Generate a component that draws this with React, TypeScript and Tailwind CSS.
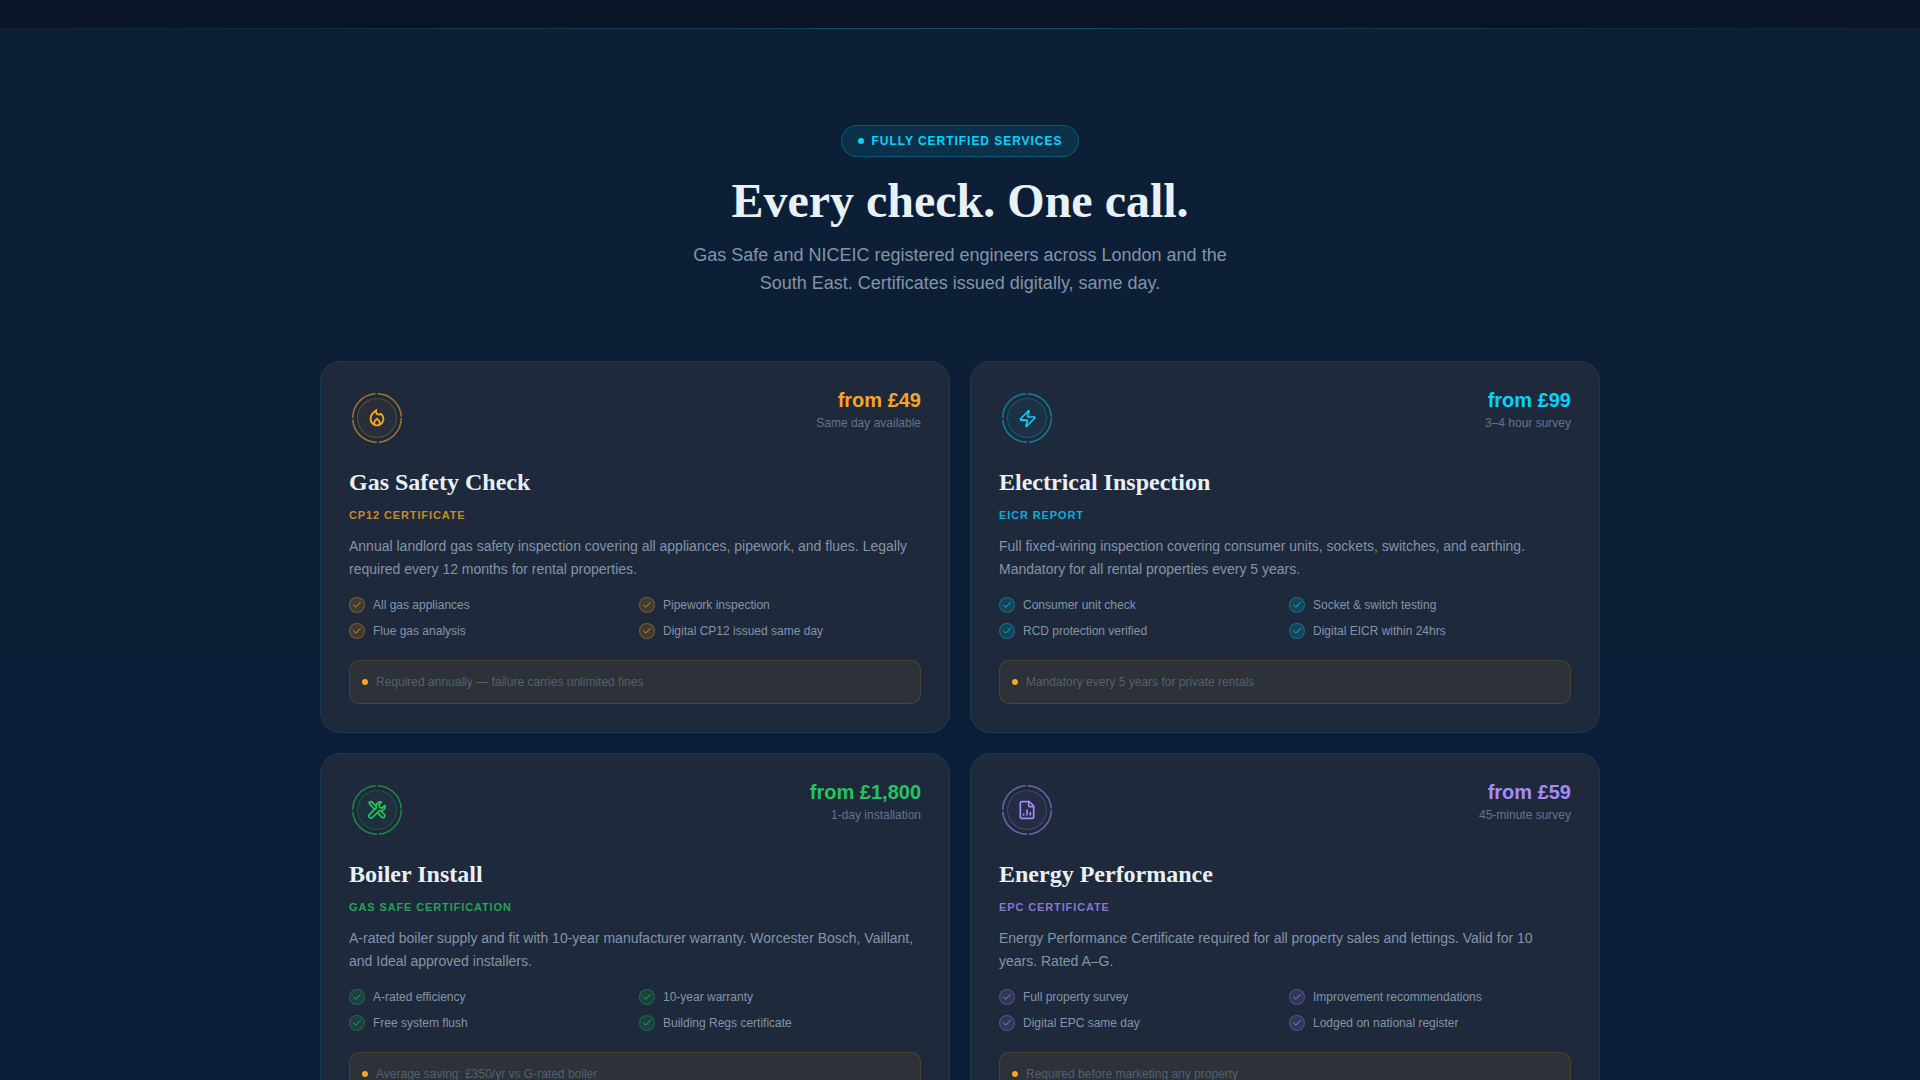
import { Check, Zap, FileChartColumn } from "lucide-react";
import { MdOutlineLocalFireDepartment } from "react-icons/md";
import type { ReactNode } from "react";

type Service = {
  title: string;
  price: string;
  note: string;
  cert: string;
  desc: string;
  features: string[];
  alert: string;
  icon: ReactNode;
  priceCls: string;
  certCls: string;
  ringCls: string;
  innerCls: string;
  tickCls: string;
};

// wrench crossed with a screwdriver, no package has this exact one
function ToolsIcon() {
  return (
    <svg width="20" height="20" viewBox="0 0 24 24" fill="none" stroke="currentColor" strokeWidth="2" strokeLinecap="round" strokeLinejoin="round">
      <path d="M17.5 2.6a5 5 0 0 0-6.2 6.6L3 17.5a2.4 2.4 0 0 0 3.5 3.5l8.3-8.3a5 5 0 0 0 6.6-6.2l-3.2 3.2-3-.9-.9-3z" />
      <path d="M8.5 10.5 3.5 5.5 2.5 2.5l3-.5 5 5" />
      <path d="m13.5 16 4 4.5a2.3 2.3 0 0 0 3.3-3.2L16.5 13.2" />
    </svg>
  );
}

const SERVICES: Service[] = [
  {
    title: "Gas Safety Check",
    price: "from £49",
    note: "Same day available",
    cert: "CP12 CERTIFICATE",
    desc: "Annual landlord gas safety inspection covering all appliances, pipework, and flues. Legally required every 12 months for rental properties.",
    features: ["All gas appliances", "Pipework inspection", "Flue gas analysis", "Digital CP12 issued same day"],
    alert: "Required annually — failure carries unlimited fines",
    icon: <MdOutlineLocalFireDepartment size={22} />,
    priceCls: "text-[#f5a623]",
    certCls: "text-[#f5a623]/80",
    ringCls: "text-[#f5a623]/60",
    innerCls: "border-[#f5a623]/25 bg-[#f5a623]/5 text-[#f5a623]",
    tickCls: "border-[#f5a623]/30 bg-[#f5a623]/15 text-[#f5a623]",
  },
  {
    title: "Electrical Inspection",
    price: "from £99",
    note: "3–4 hour survey",
    cert: "EICR REPORT",
    desc: "Full fixed-wiring inspection covering consumer units, sockets, switches, and earthing. Mandatory for all rental properties every 5 years.",
    features: ["Consumer unit check", "Socket & switch testing", "RCD protection verified", "Digital EICR within 24hrs"],
    alert: "Mandatory every 5 years for private rentals",
    icon: <Zap size={19} strokeWidth={2} />,
    priceCls: "text-[#00d4ff]",
    certCls: "text-[#00d4ff]/80",
    ringCls: "text-[#00d4ff]/50",
    innerCls: "border-[#00d4ff]/25 bg-[#00d4ff]/5 text-[#00d4ff]",
    tickCls: "border-[#00d4ff]/30 bg-[#00d4ff]/15 text-[#00d4ff]",
  },
  {
    title: "Boiler Install",
    price: "from £1,800",
    note: "1-day installation",
    cert: "GAS SAFE CERTIFICATION",
    desc: "A-rated boiler supply and fit with 10-year manufacturer warranty. Worcester Bosch, Vaillant, and Ideal approved installers.",
    features: ["A-rated efficiency", "10-year warranty", "Free system flush", "Building Regs certificate"],
    alert: "Average saving: £350/yr vs G-rated boiler",
    icon: <ToolsIcon />,
    priceCls: "text-[#22c55e]",
    certCls: "text-[#22c55e]/80",
    ringCls: "text-[#22c55e]/60",
    innerCls: "border-[#22c55e]/25 bg-[#22c55e]/5 text-[#22c55e]",
    tickCls: "border-[#22c55e]/30 bg-[#22c55e]/15 text-[#22c55e]",
  },
  {
    title: "Energy Performance",
    price: "from £59",
    note: "45-minute survey",
    cert: "EPC CERTIFICATE",
    desc: "Energy Performance Certificate required for all property sales and lettings. Valid for 10 years. Rated A–G.",
    features: ["Full property survey", "Improvement recommendations", "Digital EPC same day", "Lodged on national register"],
    alert: "Required before marketing any property",
    icon: <FileChartColumn size={20} strokeWidth={2} />,
    priceCls: "text-[#a78bfa]",
    certCls: "text-[#a78bfa]/80",
    ringCls: "text-[#a78bfa]/60",
    innerCls: "border-[#a78bfa]/25 bg-[#a78bfa]/5 text-[#a78bfa]",
    tickCls: "border-[#a78bfa]/30 bg-[#a78bfa]/15 text-[#a78bfa]",
  },
];

function ServiceCard({ s }: { s: Service }) {
  return (
    <div className="rounded-[20px] border border-[#1e3a52] bg-[#1e293b] px-7 pt-7 pb-7">
      <div className="flex items-start justify-between">
        <div className="relative mt-[3px] ml-[3px] flex h-[50px] w-[50px] items-center justify-center">
          <svg viewBox="0 0 50 50" className={`absolute inset-0 ${s.ringCls}`} fill="none">
            <circle cx="25" cy="25" r="24.25" stroke="currentColor" strokeWidth="1.5" strokeDasharray="36 2" />
          </svg>
          <div className={`flex h-10 w-10 items-center justify-center rounded-full border ${s.innerCls}`}>{s.icon}</div>
        </div>
        <div className="text-right">
          <p className={`text-xl leading-[21px] font-bold ${s.priceCls}`}>{s.price}</p>
          <p className="mt-[4px] text-xs leading-[16px] text-[#64748b]">{s.note}</p>
        </div>
      </div>
      <h3 className="mt-[23px] font-['Liberation_Serif',serif] text-2xl leading-[32px] font-bold text-[#e8f0f8]">{s.title}</h3>
      <p className={`mt-[9px] text-[11px] leading-[16px] font-bold tracking-[0.88px] ${s.certCls}`}>{s.cert}</p>
      <p className="mt-[12px] text-sm leading-[22.75px] text-[#8494a8]">{s.desc}</p>
      <ul className="mt-[15.5px] grid grid-cols-2 gap-x-2 gap-y-2">
        {s.features.map((f) => (
          <li key={f} className="flex h-[18px] items-center gap-2 text-xs text-[#8494a8]">
            <span className={`flex h-4 w-4 items-center justify-center rounded-full border ${s.tickCls}`}>
              <Check size={10} strokeWidth={2} />
            </span>
            {f}
          </li>
        ))}
      </ul>
      <div className="mt-[20px] flex h-[44px] items-center gap-2 rounded-[10px] border border-[#f5a623]/15 bg-[#f5a623]/[0.07] px-3 text-xs text-[#556070]">
        <span className="h-1.5 w-1.5 rounded-full bg-[#f5a623]" />
        {s.alert}
      </div>
    </div>
  );
}

export default function App() {
  return (
    <div className="h-[1080px] overflow-hidden bg-[linear-gradient(180deg,#0d1f35,#0a1e38)] font-['Liberation_Sans',sans-serif]">
      <div className="h-[28px] bg-[#0a1628]" />
      <div className="h-px bg-[linear-gradient(90deg,transparent,#164e63,transparent)]" />
      <section className="mx-auto w-[1280px] pt-[96px]">
        <div className="flex flex-col items-center text-center">
          <span className="flex h-8 items-center gap-2 rounded-full border border-[#00d4ff]/25 bg-[#00d4ff]/10 px-4 text-xs font-bold tracking-[0.96px] text-[#00d4ff]">
            <span className="h-1.5 w-1.5 rounded-full bg-[#00d4ff]" />
            FULLY CERTIFIED SERVICES
          </span>
          <h2 className="mt-[14px] font-['Liberation_Serif',serif] text-[48px] leading-[60px] font-bold text-[#e8f0f8]">Every check. One call.</h2>
          <p className="mt-[10px] w-[580px] text-lg leading-[28px] text-[#8494a8]">
            Gas Safe and NICEIC registered engineers across London and the South East. Certificates issued digitally, same day.
          </p>
        </div>
        <div className="mt-[64px] grid grid-cols-2 gap-5">
          {SERVICES.map((s) => (
            <ServiceCard key={s.title} s={s} />
          ))}
        </div>
      </section>
    </div>
  );
}
